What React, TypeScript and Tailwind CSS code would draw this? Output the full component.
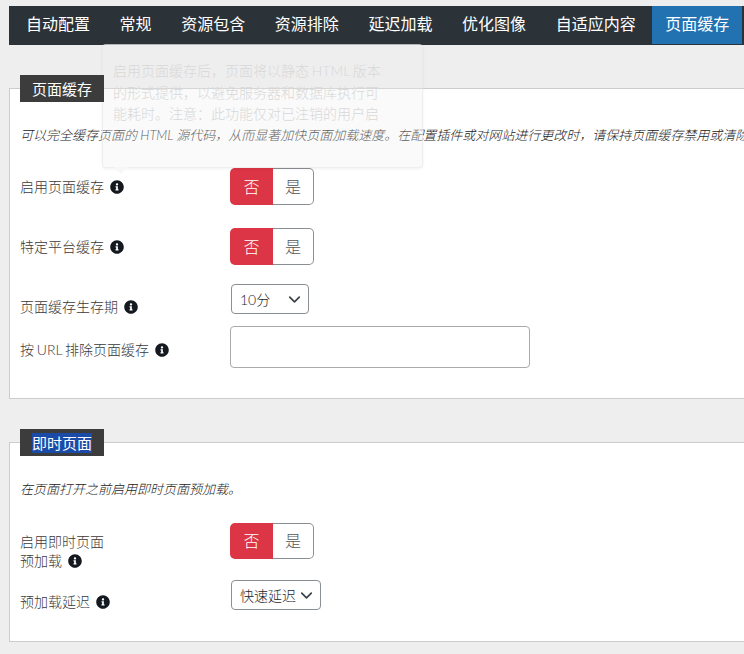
import { FaInfoCircle } from "react-icons/fa";
import { ChevronDown } from "lucide-react";

const font = { fontFamily: 'Lato, "Noto Sans CJK SC", sans-serif' };
const tabs = ["自动配置", "常规", "资源包含", "资源排除", "延迟加载", "优化图像", "自适应内容", "页面缓存"];

function Info() {
  return <FaInfoCircle className="inline-block w-[14px] h-[14px] text-[#14181f] shrink-0" />;
}

function Toggle({ h }: { h: string }) {
  return (
    <div className={`flex w-[84px] ${h} text-[16px] font-light`}>
      <div className="w-[43px] bg-[#dc3545] text-white rounded-l-[5px] flex items-center justify-center">否</div>
      <div className="w-[41px] border border-l-0 border-[#8a8f94] rounded-r-[5px] bg-white text-[#555] flex items-center justify-center">是</div>
    </div>
  );
}

function Select({ label, w }: { label: string; w: string }) {
  return (
    <div className={`${w} ml-px h-[30px] border border-[#8a8f94] rounded-[4px] bg-white flex items-center justify-between pl-[8px] pr-[4px] text-[14px] font-light text-[#1d2327]`}>
      <span>{label}</span>
      <ChevronDown className="w-[19px] h-[19px] text-[#3c434a]" strokeWidth={2.2} />
    </div>
  );
}

function Row({ label, children, h, mt }: { label: React.ReactNode; children: React.ReactNode; h: string; mt: string }) {
  return (
    <div className={`flex ${h} ${mt}`}>
      {label}
      {children}
    </div>
  );
}

function Title({ text, selected }: { text: string; selected?: boolean }) {
  return (
    <div className="relative z-20 -mt-[14px] ml-[10px] w-[84px] h-[27px] bg-[#3c3c3c] flex items-center justify-center text-[15px] text-white">
      <span className={`leading-[20px] ${selected ? "bg-[#1a4ba6]" : ""}`}>{text}</span>
    </div>
  );
}

const labelBase = "w-[210px] text-[14px] font-light text-[#3a3a3a] leading-[20px] self-end flex items-center gap-[6px]";

export default function App() {
  return (
    <div className="relative w-[744px] h-[654px] overflow-hidden bg-[#eeeeee]" style={font}>
      <div className="pt-[6px] pl-[9px]">
        <div className="h-[39px] bg-[#2c3338] flex pl-[4px] w-[735px] gap-[3.6px] text-[16px] text-white">
          {tabs.map((t, i) => (
            <div key={t} className={`px-[13px] pb-[2px] flex items-center h-[38px] ${i === 7 ? "bg-[#2271b1]" : ""}`}>
              {t}
            </div>
          ))}
        </div>
      </div>

      <div className="mt-[43px] ml-[9px] w-[760px] h-[311px] border border-[#cccccc] bg-white">
        <Title text="页面缓存" />
        <div className="mt-[23px] ml-[10px] text-[13px] font-light italic text-[#222] whitespace-nowrap leading-[20px]">
          可以完全缓存页面的 HTML 源代码，从而显著加快页面加载速度。在配置插件或对网站进行更改时，请保持页面缓存禁用或清除
        </div>
        <div className="ml-[10px]">
          <Row label={<div className={`${labelBase} pb-[8px]`}>启用页面缓存 <Info /></div>} h="h-[37px]" mt="mt-[23px]">
            <Toggle h="h-[37px]" />
          </Row>
          <Row label={<div className={`${labelBase} pb-[8px]`}>特定平台缓存 <Info /></div>} h="h-[37px]" mt="mt-[23px]">
            <Toggle h="h-[37px]" />
          </Row>
          <Row label={<div className={`${labelBase} -mb-[3px]`}>页面缓存生存期 <Info /></div>} h="h-[30px]" mt="mt-[19px]">
            <Select label="10分" w="w-[78px]" />
          </Row>
          <Row label={<div className={`${labelBase} pb-[8px] [word-spacing:-1px]`}>按 URL 排除页面缓存 <Info /></div>} h="h-[42px]" mt="mt-[12px]">
            <div className="w-[300px] h-[42px] border border-[#aaaaaa] rounded-[4px] bg-white" />
          </Row>
        </div>
      </div>

      <div className="mt-[43px] ml-[9px] w-[760px] h-[200px] border border-[#cccccc] bg-white">
        <Title text="即时页面" selected />
        <div className="mt-[23px] ml-[10px] text-[13px] font-light italic text-[#222] whitespace-nowrap leading-[20px]">
          在页面打开之前启用即时页面预加载。
        </div>
        <div className="ml-[10px]">
          <Row
            label={
              <div className="w-[210px] text-[14px] font-light text-[#3a3a3a] leading-[19px] self-end -mb-[11px]">
                <div>启用即时页面</div>
                <div className="flex items-center gap-[6px]">预加载 <Info /></div>
              </div>
            }
            h="h-[36px]"
            mt="mt-[24px]"
          >
            <Toggle h="h-[36px]" />
          </Row>
          <Row label={<div className={`${labelBase} -mb-[2px]`}>预加载延迟 <Info /></div>} h="h-[30px]" mt="mt-[21px]">
            <Select label="快速延迟" w="w-[90px]" />
          </Row>
        </div>
      </div>

      {/* fading tooltip */}
      <div className="absolute z-10 left-[102px] top-[44px] w-[321px] h-[124px] bg-[#f0f0f0]/30 rounded-[4px] border border-[#e6e6e6]/60 shadow-[0_1px_3px_rgba(0,0,0,0.06)] px-[10px] pt-[15px] text-[14px] font-light leading-[21.5px] text-[#d8d8d8] whitespace-nowrap">
        <div className="[word-spacing:-1px]">启用页面缓存后，页面将以静态 HTML 版本</div>
        <div>的形式提供，以避免服务器和数据库执行可</div>
        <div>能耗时。注意：此功能仅对已注销的用户启</div>
        <div className="absolute left-[11px] -bottom-[7px] w-0 h-0 border-x-[7px] border-x-transparent border-t-[7px] border-t-[#f7f7f7]" />
      </div>
    </div>
  );
}
